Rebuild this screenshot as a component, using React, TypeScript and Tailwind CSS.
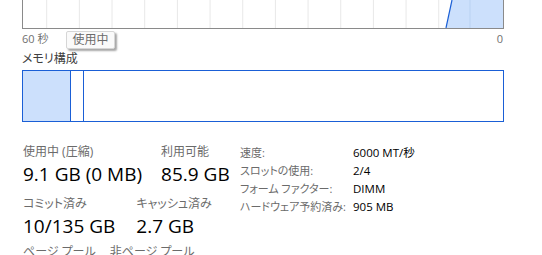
import React from 'react'

const font = { fontFamily: '"Segoe UI", "Open Sans", "Noto Sans CJK JP", sans-serif' }

function Graph() {
  const step = 32.67
  const lines = Array.from({ length: 15 }, (_, i) => 23.7 + i * step)
  return (
    <div className="relative h-[29px] w-[482px] border-x border-b border-[#8a8a8a] bg-white">
      <svg width="480" height="28" className="block">
        {lines.map((x) => (
          <line key={x} x1={x} y1="0" x2={x} y2="28" stroke="#e8e8e8" strokeWidth="1" />
        ))}
        <polygon points="423,28 429,0 480,0 480,28" fill="#cce0fc" />
        <line x1="447" y1="0" x2="447" y2="28" stroke="#b9d2f2" strokeWidth="1" />
        <line x1="423" y1="28" x2="429" y2="0" stroke="#1a5fd6" strokeWidth="1.2" />
      </svg>
    </div>
  )
}

function Stat({ label, value }: { label: string; value: string }) {
  return (
    <div className="flex flex-col whitespace-nowrap">
      <span className="text-[12px] leading-[16px] text-[#6b6b6b]">{label}</span>
      <span className="mt-[1px] text-[19px] leading-[26px] text-black">{value}</span>
    </div>
  )
}

export default function App() {
  const details = [
    ['速度:', '6000 MT/秒'],
    ['スロットの使用:', '2/4'],
    ['フォーム ファクター:', 'DIMM'],
    ['ハードウェア予約済み:', '905 MB'],
  ]
  return (
    <div
      className="relative h-[255px] w-[542px] overflow-hidden bg-white pl-[22px] [font-feature-settings:'palt']"
      style={font}
    >
      <Graph />
      <div className="mt-[3px] flex w-[482px] justify-between text-[11px] leading-[14px] text-[#707070]">
        <span>60 秒</span>
        <span className="pr-[1px]">0</span>
      </div>
      <div className="absolute left-[66px] top-[31px] flex h-[18px] w-[49px] items-center justify-center rounded-[2px] border border-[#d6d6d6] bg-[#fafafa] text-[12px] text-[#6b6b6b] shadow-[2px_2px_2px_rgba(0,0,0,0.35)]">
        使用中
      </div>
      <div className="mt-[5px] text-[12px] leading-[16px] text-[#404040]">メモリ構成</div>
      <div className="mt-[3px] flex h-[52px] w-[482px] border border-[#1a5fd6]">
        <div className="w-[48px] border-r border-[#1a5fd6] bg-[#cce0fc]" />
        <div className="w-[13px] border-r border-[#1a5fd6]" />
        <div className="flex-1" />
      </div>
      <div className="mt-[22px] flex">
        <div className="flex w-[218px] flex-col pl-[1px]">
          <div className="flex gap-[19px]">
            <Stat label="使用中 (圧縮)" value="9.1 GB (0 MB)" />
            <Stat label="利用可能" value="85.9 GB" />
          </div>
          <div className="mt-[9px] flex gap-[21px]">
            <Stat label="コミット済み" value="10/135 GB" />
            <Stat label="キャッシュ済み" value="2.7 GB" />
          </div>
          <div className="mt-[5px] flex gap-[14px] whitespace-nowrap text-[12px] leading-[16px] text-[#6b6b6b]">
            <span>ページ プール</span>
            <span>非ページ プール</span>
          </div>
        </div>
        <div className="flex flex-col">
          {details.map(([k, v]) => (
            <div key={k} className="flex h-[18px] items-center whitespace-nowrap">
              <span className="w-[113px] shrink-0 text-[11px] text-[#6b6b6b]">{k}</span>
              <span className="text-[11.5px] text-black">{v}</span>
            </div>
          ))}
        </div>
      </div>
    </div>
  )
}
